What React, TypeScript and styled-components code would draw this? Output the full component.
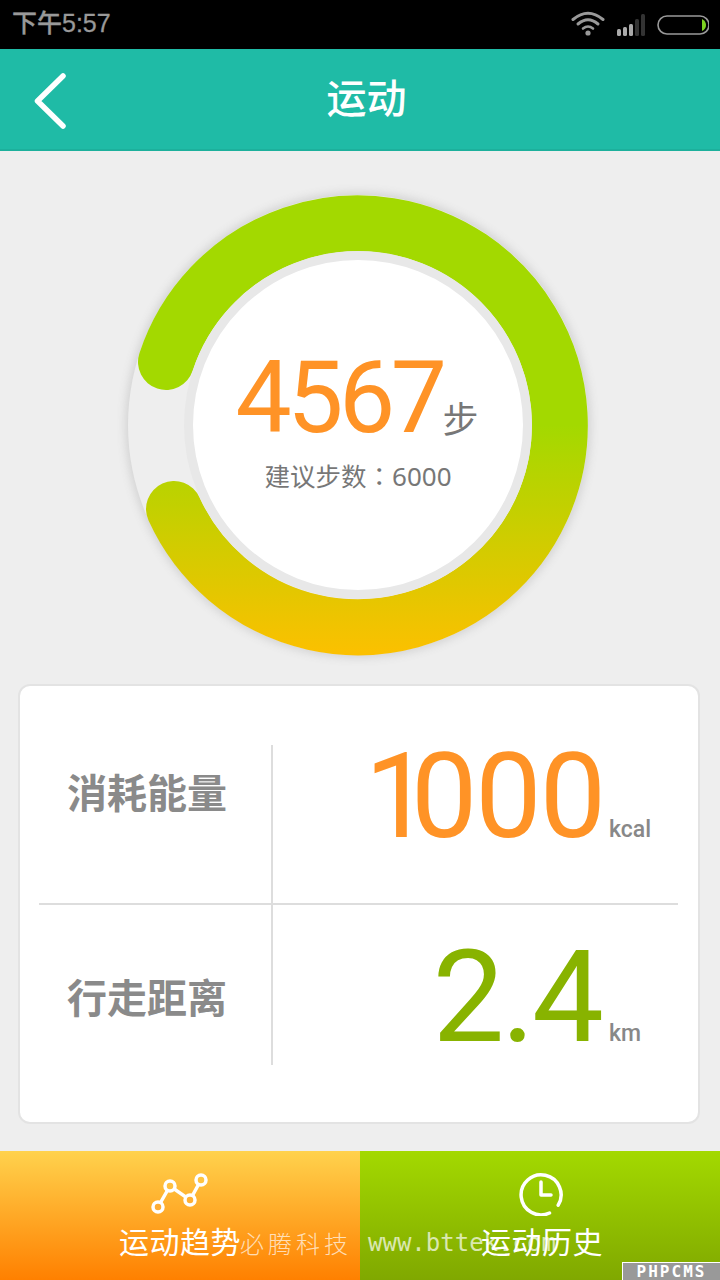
import React from 'react';
import styled, { createGlobalStyle } from 'styled-components';

const Global = createGlobalStyle`
  html, body { margin: 0; padding: 0; background: #eeeeee; }
  * { box-sizing: border-box; }
  body { font-family: "Noto Sans CJK SC", "Noto Sans", sans-serif; }
`;

const Screen = styled.div`
  position: relative;
  width: 720px;
  height: 1280px;
  display: flex;
  flex-direction: column;
  overflow: hidden;
  background: #eeeeee;
`;

const StatusBar = styled.div`
  height: 49px;
  background: #000;
  display: flex;
  align-items: center;
  justify-content: space-between;
  padding: 0 11px 0 12px;
`;

const Clock = styled.span`
  font-family: "Liberation Sans", "Noto Sans CJK SC", sans-serif;
  font-size: 25px;
  line-height: 30px;
  padding-bottom: 3px;
  color: #999;
  font-weight: 500;
  -webkit-text-stroke: 0.3px #999;
`;

const StatusIcons = styled.svg`
  display: block;
`;

const Header = styled.header`
  position: relative;
  height: 102px;
  background: #1fbba6;
  border-bottom: 2px solid #1cb09c;
  display: flex;
  align-items: center;
  justify-content: center;
  padding: 0 0 6px 13px;
`;

const BackIcon = styled.svg`
  position: absolute;
  left: 30px;
  top: 22px;
`;

const Title = styled.h1`
  margin: 0;
  font-size: 40px;
  font-weight: 500;
  color: #fff;
  line-height: 1;
`;

const RingSection = styled.section`
  height: 533px;
  padding: 44px 0 0 128px;
`;

const RingTrack = styled.div`
  position: relative;
  width: 460px;
  height: 460px;
  border-radius: 50%;
  background: #eeeeee;
  box-shadow: 0 0 8px 3px #d4d4d4;
  display: flex;
  align-items: center;
  justify-content: center;
`;

const RingArc = styled.svg`
  position: absolute;
  left: 0;
  top: 0;
  overflow: visible;
`;

const RingCenter = styled.div`
  position: relative;
  width: 348px;
  height: 348px;
  border-radius: 50%;
  background: #fff;
  border: 9px solid #e8e8e8;
  display: flex;
  flex-direction: column;
  align-items: center;
  padding-top: 88px;
`;

const StepsLine = styled.div`
  display: flex;
  align-items: flex-end;
`;

const BigNumber = styled.span<{ $color: string; $size: number; $spacing: number }>`
  font-family: Roboto, "Noto Sans", sans-serif;
  font-size: ${p => p.$size}px;
  letter-spacing: ${p => p.$spacing}px;
  color: ${p => p.$color};
  font-weight: 400;
  line-height: 1;
`;

const NarrowOne = styled.span`
  letter-spacing: -20px;
`;

const StepUnit = styled.span`
  font-size: 36px;
  color: #777;
  line-height: 1;
  margin: 0 2px 13px 0;
`;

const Suggestion = styled.div`
  margin-top: 10px;
  font-size: 25.5px;
  line-height: 34px;
  color: #777;
  white-space: nowrap;
`;

const CenteredColon = styled.span`
  font-family: "Noto Sans CJK TC", sans-serif;
`;

const SuggestionDigits = styled.span`
  font-family: "Noto Sans", sans-serif;
  font-size: 26px;
`;

const Card = styled.section`
  margin: 0 20px 0 18px;
  height: 440px;
  border: 2px solid #e3e3e3;
  border-radius: 12px;
  background: #fff;
  padding: 59px 20px 0 19px;
`;

const StatRow = styled.div<{ $divider?: boolean }>`
  display: grid;
  grid-template-columns: 232px 2px 1fr;
  height: 160px;
  ${p => (p.$divider ? 'border-bottom: 2px solid #dddddd;' : '')}
`;

const StatLabel = styled.div<{ $offset: number }>`
  font-size: 40px;
  font-weight: 700;
  line-height: 1;
  color: #8a8a8a;
  padding: ${p => p.$offset}px 0 0 28px;
  white-space: nowrap;
`;

const VRule = styled.div`
  background: #dddddd;
`;

const StatValue = styled.div<{ $offset: number }>`
  display: flex;
  align-items: baseline;
  margin-top: ${p => p.$offset}px;
`;

const NumberBox = styled.div<{ $inset?: number }>`
  width: 331px;
  text-align: right;
  padding-right: ${p => p.$inset ?? 0}px;
`;

const StatUnit = styled.span`
  font-family: Roboto, "Noto Sans", sans-serif;
  font-size: 23px;
  font-weight: 500;
  color: #888;
  margin-left: 5px;
`;

const BottomBar = styled.nav`
  position: relative;
  margin-top: 27px;
  height: 129px;
  display: grid;
  grid-template-columns: 360px 360px;
`;

const ActionButton = styled.button<{ $from: string; $to: string }>`
  border: 0;
  padding: 21px 0 0;
  background: linear-gradient(${p => p.$from}, ${p => p.$to});
  display: flex;
  flex-direction: column;
  align-items: center;
  color: #fff;
  font-family: inherit;
`;

const ActionIcon = styled.svg`
  display: block;
`;

const ActionLabel = styled.span<{ $shift?: number }>`
  font-size: 30px;
  line-height: 40px;
  letter-spacing: 0.5px;
  margin-top: 4px;
  margin-left: ${p => p.$shift ?? 0}px;
  position: relative;
  z-index: 2;
`;

const Watermark = styled.div`
  position: absolute;
  left: 240px;
  top: 74px;
  display: flex;
  align-items: center;
  gap: 16px;
  color: rgba(255, 255, 255, 0.7);
  white-space: nowrap;
  line-height: 36px;
`;

const WatermarkCn = styled.span`
  font-family: "Noto Sans CJK SC", serif;
  font-size: 24px;
  letter-spacing: 4px;
  font-weight: 300;
`;

const WatermarkUrl = styled.span`
  font-family: "DejaVu Sans Mono", monospace;
  font-size: 24px;
`;

const Badge = styled.div`
  position: absolute;
  right: 0;
  bottom: 0;
  width: 98px;
  height: 18px;
  background: #999;
  border: 1px solid #fff;
  border-right: 0;
  border-bottom: 0;
  color: #fff;
  font-family: "DejaVu Sans Mono", monospace;
  font-size: 16px;
  font-weight: 700;
  line-height: 17px;
  text-align: center;
  letter-spacing: 2px;
`;

export default function App() {
  return (
    <Screen>
      <Global />
      <StatusBar>
        <Clock>下午5:57</Clock>
        <StatusIcons width="140" height="30" viewBox="568 9 140 30">
          <path d="M572 18.5 Q587 6 602 18.5" fill="none" stroke="#999" strokeWidth="3" strokeLinecap="round" />
          <path d="M577 23 Q587 14.5 597 23" fill="none" stroke="#999" strokeWidth="3" strokeLinecap="round" />
          <path d="M582 27.5 Q587 23.5 592 27.5" fill="none" stroke="#999" strokeWidth="2.6" strokeLinecap="round" />
          <circle cx="587" cy="32" r="2.6" fill="#999" />
          <rect x="616" y="28" width="4" height="7" rx="1.5" fill="#aaa" />
          <rect x="622" y="26" width="4" height="9" rx="1.5" fill="#aaa" />
          <rect x="628" y="23" width="4" height="12" rx="1.5" fill="#aaa" />
          <rect x="634" y="18" width="4" height="17" rx="1.5" fill="#333" />
          <rect x="640" y="13" width="4" height="22" rx="1.5" fill="#333" />
          <rect x="657" y="15" width="51" height="18" rx="9" fill="none" stroke="#999" strokeWidth="1.6" />
          <path d="M701 18 Q705 20 705 24 Q705 28 701 30 Z" fill="#7ed321" />
        </StatusIcons>
      </StatusBar>
      <Header>
        <BackIcon width="40" height="60" viewBox="0 0 40 60">
          <path d="M33 5 L7.5 30 L33 55" fill="none" stroke="#fff" strokeWidth="5.5" strokeLinecap="round" strokeLinejoin="round" />
        </BackIcon>
        <Title>运动</Title>
      </Header>
      <RingSection>
        <RingTrack>
          <RingArc width="460" height="460" viewBox="0 0 460 460">
            <defs>
              <linearGradient id="ringGrad" gradientUnits="userSpaceOnUse" x1="0" y1="230" x2="0" y2="460">
                <stop offset="0" stopColor="#a3d900" />
                <stop offset="1" stopColor="#fcc000" />
              </linearGradient>
            </defs>
            <path
              d="M38 167 A202 202 0 1 1 46 314"
              fill="none"
              stroke="url(#ringGrad)"
              strokeWidth="56"
              strokeLinecap="round"
            />
          </RingArc>
          <RingCenter>
            <StepsLine>
              <BigNumber $color="#ff9326" $size={100} $spacing={-4.5}>4567</BigNumber>
              <StepUnit>步</StepUnit>
            </StepsLine>
            <Suggestion>
              建议步数<CenteredColon>：</CenteredColon><SuggestionDigits>6000</SuggestionDigits>
            </Suggestion>
          </RingCenter>
        </RingTrack>
      </RingSection>
      <Card>
        <StatRow $divider>
          <StatLabel $offset={26}>消耗能量</StatLabel>
          <VRule />
          <StatValue $offset={-7}>
            <NumberBox>
              <BigNumber $color="#ff9326" $size={118} $spacing={-2}><NarrowOne>1</NarrowOne>000</BigNumber>
            </NumberBox>
            <StatUnit>kcal</StatUnit>
          </StatValue>
        </StatRow>
        <StatRow>
          <StatLabel $offset={71}>行走距离</StatLabel>
          <VRule />
          <StatValue $offset={28}>
            <NumberBox $inset={3}><BigNumber $color="#88b300" $size={128} $spacing={-3}>2.4</BigNumber></NumberBox>
            <StatUnit>km</StatUnit>
          </StatValue>
        </StatRow>
      </Card>
      <BottomBar>
        <ActionButton $from="#ffd24d" $to="#ff8000">
          <ActionIcon width="62" height="44" viewBox="149 1172 62 44">
            <path d="M158 1207 L170 1186 L190 1200 L201 1180" fill="none" stroke="#fff" strokeWidth="3.5" />
            <circle cx="158" cy="1207" r="5" fill="#ffad33" stroke="#fff" strokeWidth="3.5" />
            <circle cx="170" cy="1186" r="5" fill="#ffc040" stroke="#fff" strokeWidth="3.5" />
            <circle cx="190" cy="1200" r="5" fill="#ffb033" stroke="#fff" strokeWidth="3.5" />
            <circle cx="201" cy="1180" r="5" fill="#ffc440" stroke="#fff" strokeWidth="3.5" />
          </ActionIcon>
          <ActionLabel>运动趋势</ActionLabel>
        </ActionButton>
        <ActionButton $from="#a3d900" $to="#80a800">
          <ActionIcon width="50" height="44" viewBox="515 1172 50 44">
            <path d="M558.2 1205.2 A20 20 0 1 0 549.5 1213" fill="none" stroke="#fff" strokeWidth="3.5" strokeLinecap="round" />
            <path d="M541 1182 V1195 H551" fill="none" stroke="#fff" strokeWidth="3.5" strokeLinecap="round" strokeLinejoin="round" />
          </ActionIcon>
          <ActionLabel $shift={4}>运动历史</ActionLabel>
        </ActionButton>
        <Watermark>
          <WatermarkCn>必腾科技</WatermarkCn>
          <WatermarkUrl>www.bttek.com</WatermarkUrl>
        </Watermark>
        <Badge>PHPCMS</Badge>
      </BottomBar>
    </Screen>
  );
}
